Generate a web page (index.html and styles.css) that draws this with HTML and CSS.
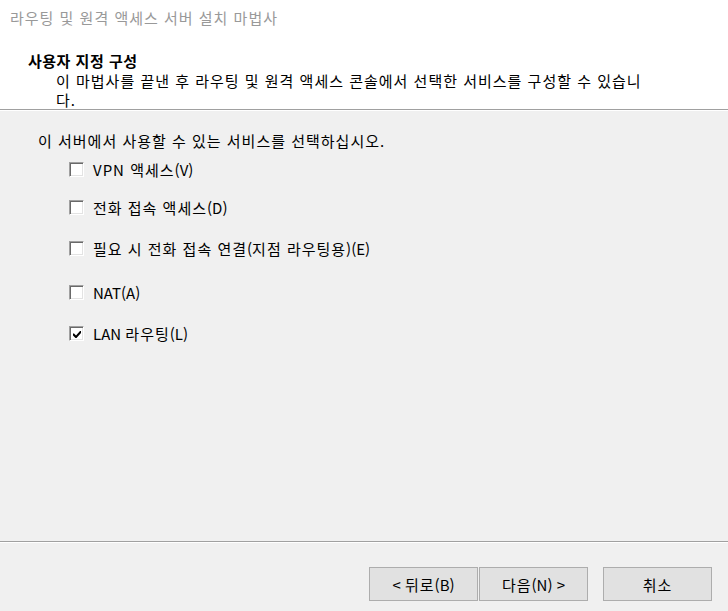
FILE: index.html
```html
<!DOCTYPE html>
<html lang="ko">
<head>
<meta charset="utf-8">
<link rel="stylesheet" href="styles.css">
</head>
<body>
<div class="wizard">
  <div class="header">
    <div class="wintitle">라우팅 및 원격 액세스 서버 설치 마법사</div>
    <div class="heading">사용자 지정 구성</div>
    <div class="subtitle">이 마법사를 끝낸 후 라우팅 및 원격 액세스 콘솔에서 선택한 서비스를 구성할 수 있습니<br>다.</div>
  </div>
  <div class="sep"></div>
  <div class="content">
    <div class="prompt">이 서버에서 사용할 수 있는 서비스를 선택하십시오.</div>
    <div class="options">
      <label class="opt"><span class="box"></span><span>VPN 액세스<span class="lat">(V)</span></span></label>
      <label class="opt o2"><span class="box"></span><span>전화 접속 액세스<span class="lat">(D)</span></span></label>
      <label class="opt o3"><span class="box"></span><span>필요 시 전화 접속 연결<span class="lat">(</span>지점 라우팅용<span class="lat">)(E)</span></span></label>
      <label class="opt o4"><span class="box"></span><span class="lat">NAT(A)</span></label>
      <label class="opt o5"><span class="box"><svg class="tick" width="8" height="7" viewBox="0 0 8 7"><path d="M0 2.5 L0 4.5 L2.5 7 L3.5 7 L8 2 L8 0 L7 0 L3 4.5 L1 2.5 Z" fill="#000"/></svg></span><span><span class="lat">LAN </span>라우팅<span class="lat">(L)</span></span></label>
    </div>
  </div>
  <div class="sep"></div>
  <div class="footer">
    <div class="btn"><span><span class="lat">&lt; </span>뒤로<span class="lat">(B)</span></span></div>
    <div class="btn"><span>다음<span class="lat">(N) &gt;</span></span></div>
    <div class="btn cancel">취소</div>
  </div>
</div>
</body>
</html>
```
FILE: styles.css
```css
html, body {
  margin: 0;
  padding: 0;
}
body {
  font-family: "Noto Sans CJK KR", "Noto Sans", sans-serif;
  font-size: 15px;
  letter-spacing: 1px;
  color: #000;
  background: #f0f0f0;
}
.lat {
  letter-spacing: 0;
}
.wizard {
  width: 728px;
  height: 611px;
  display: flex;
  flex-direction: column;
}
.header {
  background: #fff;
  height: 109px;
  box-sizing: border-box;
  padding: 7px 0 0 10px;
}
.wintitle {
  color: #999;
  line-height: 22px;
}
.heading {
  font-weight: bold;
  letter-spacing: 0.5px;
  margin: 22px 0 0 18px;
  line-height: 20px;
}
.subtitle {
  margin-left: 46px;
  line-height: 19px;
}
.sep {
  height: 1px;
  background: #a0a0a0;
  border-bottom: 1px solid #fff;
}
.content {
  flex: 1;
  padding: 20px 0 0 38px;
}
.prompt {
  line-height: 20px;
}
.options {
  margin-left: 31px;
  display: flex;
  flex-direction: column;
  margin-top: 8px;
}
.opt {
  display: flex;
  align-items: center;
  gap: 9px;
  line-height: 21px;
  height: 21px;
}
.o2 { margin-top: 17px; }
.o3 { margin-top: 20px; }
.o4 { margin-top: 23px; }
.o5 { margin-top: 20px; }
.box {
  box-sizing: border-box;
  width: 15px;
  height: 15px;
  flex: none;
  background: #fff;
  border-top: 1px solid #a0a0a0;
  border-left: 1px solid #a0a0a0;
  border-right: 1px solid #fff;
  border-bottom: 1px solid #fff;
  box-shadow: inset 1px 1px 0 #696969, inset -1px -1px 0 #e3e3e3;
  display: flex;
  align-items: center;
  justify-content: center;
}
.tick {
  display: block;
  margin: 1px 0 0 1px;
}
.footer {
  height: 68px;
  display: flex;
  align-items: flex-start;
  justify-content: flex-end;
  padding: 24px 16px 0 0;
  box-sizing: border-box;
}
.btn {
  width: 107px;
  height: 32px;
  border: 1px solid #adadad;
  background: #e1e1e1;
  display: flex;
  align-items: center;
  justify-content: center;
  margin-left: 1px;
}
.btn.cancel {
  margin-left: 15px;
}
```
